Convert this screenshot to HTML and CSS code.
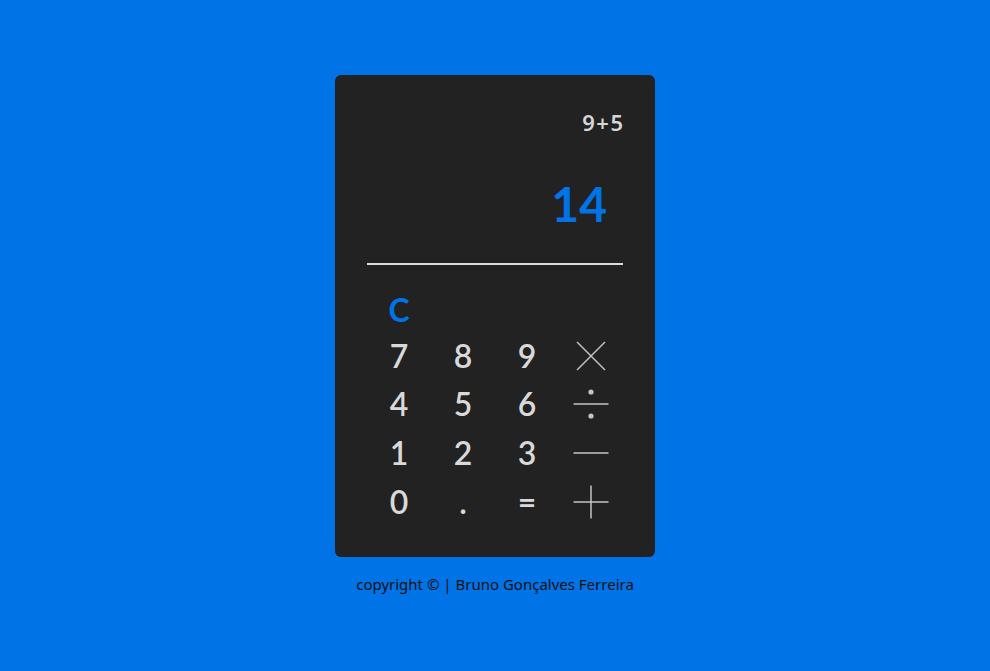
FILE: index.html
```html
<!DOCTYPE html>
<html lang="pt">
<head>
<meta charset="utf-8">
<title>Calculadora</title>
<link rel="stylesheet" href="styles.css">
</head>
<body>
<main class="page">
  <section class="calc">
    <div class="display">
      <div class="expr">9+5</div>
      <div class="result">14</div>
    </div>
    <div class="keys">
      <button class="key key-clear">C</button>
      <span></span><span></span><span></span>
      <button class="key">7</button>
      <button class="key">8</button>
      <button class="key">9</button>
      <button class="key op"><svg width="36" height="36" viewBox="0 0 36 36"><line x1="4" y1="4" x2="32" y2="32"/><line x1="32" y1="4" x2="4" y2="32"/></svg></button>
      <button class="key">4</button>
      <button class="key">5</button>
      <button class="key">6</button>
      <button class="key op"><svg width="36" height="36" viewBox="0 0 36 36"><line x1="0.5" y1="18" x2="35.5" y2="18"/><circle cx="18" cy="6" r="2.6"/><circle cx="18" cy="30" r="2.6"/></svg></button>
      <button class="key">1</button>
      <button class="key">2</button>
      <button class="key">3</button>
      <button class="key op"><svg width="36" height="36" viewBox="0 0 36 36"><line x1="0.5" y1="18" x2="35.5" y2="18"/></svg></button>
      <button class="key">0</button>
      <button class="key">.</button>
      <button class="key">=</button>
      <button class="key op"><svg width="36" height="36" viewBox="0 0 36 36"><line x1="0.5" y1="18" x2="35.5" y2="18"/><line x1="18" y1="1.5" x2="18" y2="34.5"/></svg></button>
    </div>
  </section>
  <footer class="footer">copyright © | Bruno Gonçalves Ferreira</footer>
</main>
</body>
</html>
```

FILE: styles.css
```css
* { box-sizing: border-box; }
html, body { margin: 0; padding: 0; }
body {
  background: #0073e6;
  font-family: Lato, "Noto Sans", sans-serif;
  min-height: 100vh;
}
.page {
  display: flex;
  flex-direction: column;
  align-items: center;
  padding-top: 75px;
}
.calc {
  width: 320px;
  height: 482px;
  background: #222222;
  border-radius: 6px;
  padding: 34px 32px 0;
}
.display {
  border-bottom: 2px solid #dcdcdc;
  padding-bottom: 30px;
  text-align: right;
}
.expr {
  font-family: "Noto Sans", Lato, sans-serif;
  font-size: 22px;
  line-height: 1.2;
  font-weight: 600;
  letter-spacing: 1.5px;
  margin-right: -1.5px;
  color: #d6d6d6;
}
.result {
  margin-top: 40px;
  margin-right: 16px;
  font-size: 48px;
  line-height: 1.2;
  font-weight: 700;
  color: #0073e6;
}
.keys {
  margin-top: 23px;
  display: grid;
  grid-template-columns: repeat(4, 64px);
  grid-template-rows: 44px 48px 49px 49px 48px;
}
.key {
  background: none;
  border: 0;
  padding: 0;
  margin: 0;
  font-family: inherit;
  font-size: 32px;
  font-weight: 600;
  line-height: 1;
  color: #d9d9d9;
  display: flex;
  align-items: center;
  justify-content: center;
  cursor: pointer;
}
.key-clear { color: #0073e6; font-weight: 700; }
.op svg { display: block; }
.op line { stroke: #c4c4c4; stroke-width: 1.5; }
.op circle { fill: #c4c4c4; }
.footer {
  margin-top: 17px;
  font-family: "Noto Sans", Lato, sans-serif;
  font-size: 15px;
  color: #111;
}
```
